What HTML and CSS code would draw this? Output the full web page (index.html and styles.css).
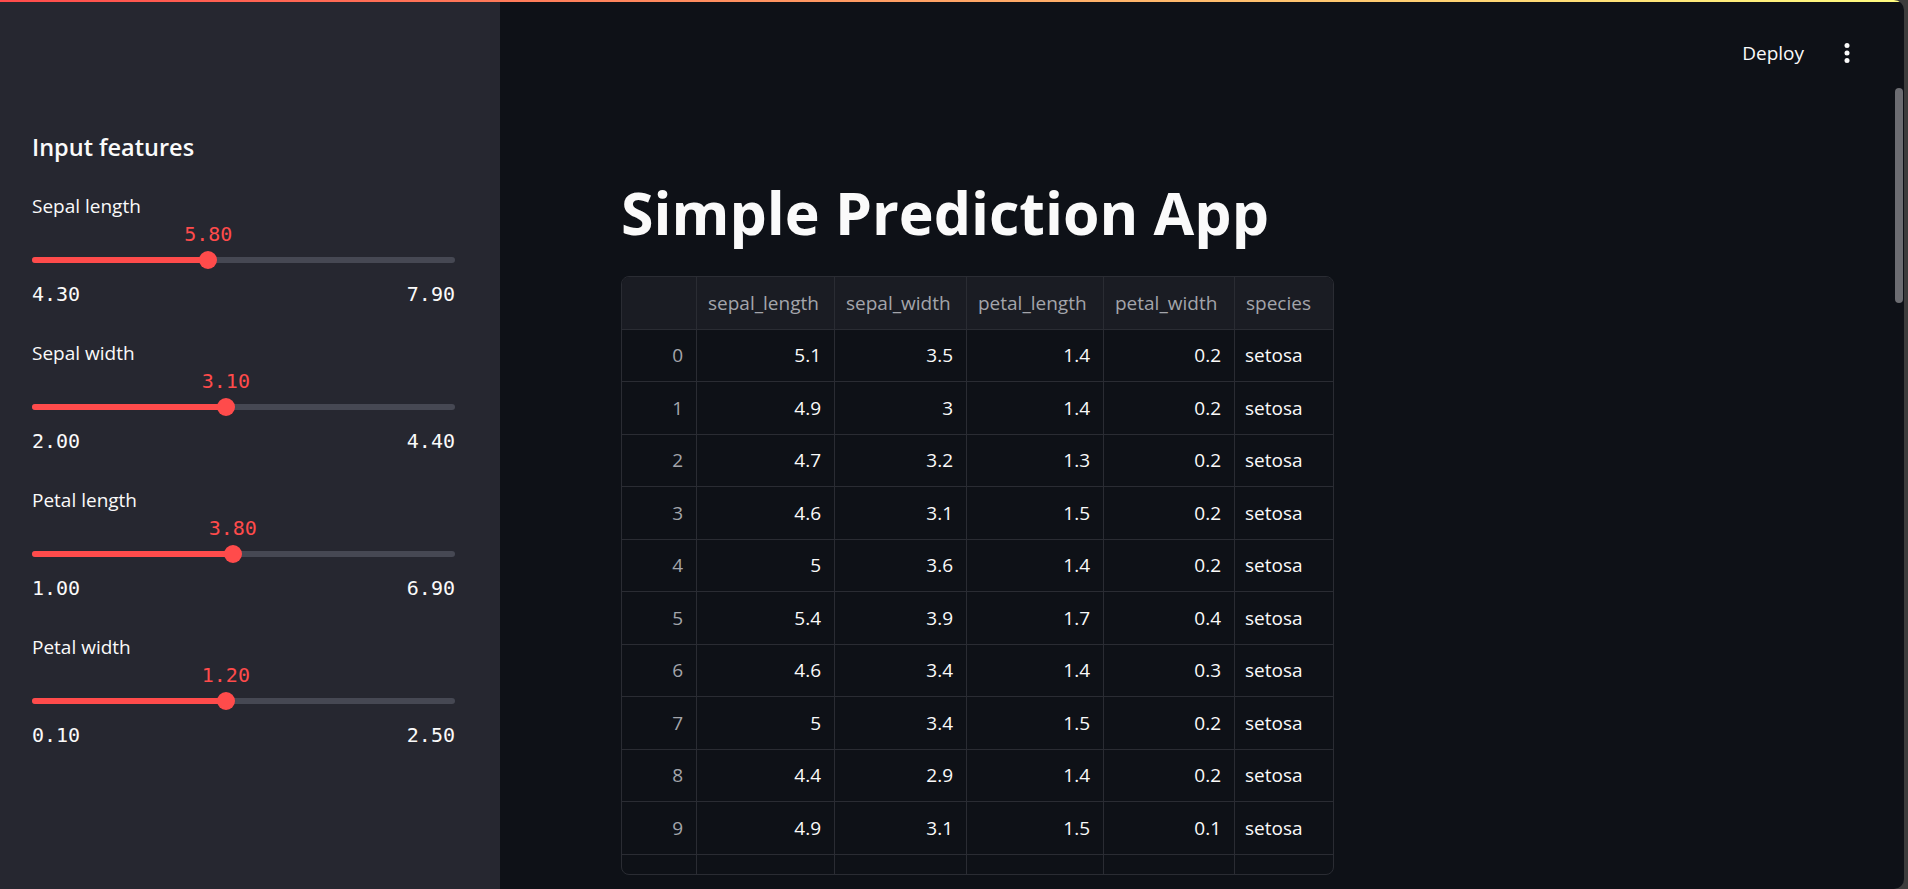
FILE: index.html
```html
<!DOCTYPE html>
<html lang="en">
<head>
<meta charset="utf-8">
<title>Simple Prediction App</title>
<link rel="stylesheet" href="styles.css">
</head>
<body>
<div class="app">
  <div class="decoration"></div>
  <aside class="sidebar">
    <h2 class="sidebar-title">Input features</h2>

    <div class="slider">
      <div class="slider-label">Sepal length</div>
      <div class="slider-body">
        <span class="slider-value" style="left:41.67%">5.80</span>
        <div class="track"><div class="fill" style="width:41.67%"></div><div class="thumb" style="left:41.67%"></div></div>
      </div>
      <div class="slider-range"><span>4.30</span><span>7.90</span></div>
    </div>

    <div class="slider">
      <div class="slider-label">Sepal width</div>
      <div class="slider-body">
        <span class="slider-value" style="left:45.83%">3.10</span>
        <div class="track"><div class="fill" style="width:45.83%"></div><div class="thumb" style="left:45.83%"></div></div>
      </div>
      <div class="slider-range"><span>2.00</span><span>4.40</span></div>
    </div>

    <div class="slider">
      <div class="slider-label">Petal length</div>
      <div class="slider-body">
        <span class="slider-value" style="left:47.46%">3.80</span>
        <div class="track"><div class="fill" style="width:47.46%"></div><div class="thumb" style="left:47.46%"></div></div>
      </div>
      <div class="slider-range"><span>1.00</span><span>6.90</span></div>
    </div>

    <div class="slider">
      <div class="slider-label">Petal width</div>
      <div class="slider-body">
        <span class="slider-value" style="left:45.83%">1.20</span>
        <div class="track"><div class="fill" style="width:45.83%"></div><div class="thumb" style="left:45.83%"></div></div>
      </div>
      <div class="slider-range"><span>0.10</span><span>2.50</span></div>
    </div>
  </aside>

  <main class="main">
    <header class="topbar">
      <button class="deploy">Deploy</button>
      <button class="menu" aria-label="Main menu">
        <svg width="24" height="24" viewBox="0 0 24 24"><circle cx="12" cy="4.5" r="2.5" fill="#fafafa"/><circle cx="12" cy="12" r="2.5" fill="#fafafa"/><circle cx="12" cy="19.5" r="2.5" fill="#fafafa"/></svg>
      </button>
    </header>

    <div class="content">
      <h1 class="title">Simple Prediction App</h1>

      <div class="table">
        <div class="cell head idx"></div>
        <div class="cell head">sepal_length</div>
        <div class="cell head">sepal_width</div>
        <div class="cell head">petal_length</div>
        <div class="cell head">petal_width</div>
        <div class="cell head last">species</div>

        <div class="cell idx">0</div><div class="cell num">5.1</div><div class="cell num">3.5</div><div class="cell num">1.4</div><div class="cell num">0.2</div><div class="cell last">setosa</div>
        <div class="cell idx">1</div><div class="cell num">4.9</div><div class="cell num">3</div><div class="cell num">1.4</div><div class="cell num">0.2</div><div class="cell last">setosa</div>
        <div class="cell idx">2</div><div class="cell num">4.7</div><div class="cell num">3.2</div><div class="cell num">1.3</div><div class="cell num">0.2</div><div class="cell last">setosa</div>
        <div class="cell idx">3</div><div class="cell num">4.6</div><div class="cell num">3.1</div><div class="cell num">1.5</div><div class="cell num">0.2</div><div class="cell last">setosa</div>
        <div class="cell idx">4</div><div class="cell num">5</div><div class="cell num">3.6</div><div class="cell num">1.4</div><div class="cell num">0.2</div><div class="cell last">setosa</div>
        <div class="cell idx">5</div><div class="cell num">5.4</div><div class="cell num">3.9</div><div class="cell num">1.7</div><div class="cell num">0.4</div><div class="cell last">setosa</div>
        <div class="cell idx">6</div><div class="cell num">4.6</div><div class="cell num">3.4</div><div class="cell num">1.4</div><div class="cell num">0.3</div><div class="cell last">setosa</div>
        <div class="cell idx">7</div><div class="cell num">5</div><div class="cell num">3.4</div><div class="cell num">1.5</div><div class="cell num">0.2</div><div class="cell last">setosa</div>
        <div class="cell idx">8</div><div class="cell num">4.4</div><div class="cell num">2.9</div><div class="cell num">1.4</div><div class="cell num">0.2</div><div class="cell last">setosa</div>
        <div class="cell idx">9</div><div class="cell num">4.9</div><div class="cell num">3.1</div><div class="cell num">1.5</div><div class="cell num">0.1</div><div class="cell last">setosa</div>
        <div class="cell idx partial"></div><div class="cell num partial"></div><div class="cell num partial"></div><div class="cell num partial"></div><div class="cell num partial"></div><div class="cell last partial"></div>
      </div>
    </div>

    <div class="scrollbar"></div>
  </main>
</div>
</body>
</html>
```

FILE: styles.css
```css
html, body {
  margin: 0;
  padding: 0;
}

body {
  background: #3c3c3c;
  font-family: "Open Sans", "Noto Sans", sans-serif;
  color: #fafafa;
  overflow: hidden;
}

.app {
  position: relative;
  display: flex;
  width: 1904px;
  height: 889px;
  background: #0e1117;
  border-radius: 0 10px 10px 0;
  overflow: hidden;
}

.decoration {
  position: absolute;
  top: 0;
  left: 0;
  right: 0;
  height: 2px;
  background: linear-gradient(90deg, #ff4b4b, #fffd80);
  z-index: 5;
}

/* ---------- Sidebar ---------- */
.sidebar {
  flex: none;
  width: 500px;
  box-sizing: border-box;
  background: #262730;
  padding: 129px 45px 0 32px;
}

.sidebar-title {
  margin: 0 0 27px;
  font-size: 23.5px;
  font-weight: 600;
  line-height: 36px;
  color: #fafafa;
}

.slider {
  margin-bottom: 33px;
}

.slider-label {
  font-size: 19px;
  line-height: 28px;
  color: #fafafa;
}

.slider-body {
  position: relative;
  height: 48px;
  box-sizing: border-box;
  padding-top: 37px;
}

.slider-value {
  position: absolute;
  top: 2px;
  transform: translateX(-50%);
  font-family: "DejaVu Sans Mono", "Liberation Mono", monospace;
  font-size: 20px;
  line-height: 24px;
  color: #ff4b4b;
  white-space: nowrap;
}

.track {
  position: relative;
  height: 6px;
  border-radius: 3px;
  background: #464853;
}

.fill {
  height: 100%;
  border-radius: 3px;
  background: #ff4b4b;
}

.thumb {
  position: absolute;
  top: 50%;
  width: 18px;
  height: 18px;
  border-radius: 50%;
  background: #ff4b4b;
  transform: translate(-50%, -50%);
}

.slider-range {
  display: flex;
  justify-content: space-between;
  margin-top: 14px;
  font-family: "DejaVu Sans Mono", "Liberation Mono", monospace;
  font-size: 20px;
  line-height: 24px;
  color: #fafafa;
}

/* ---------- Main ---------- */
.main {
  position: relative;
  flex: 1;
  min-width: 0;
}

.topbar {
  display: flex;
  justify-content: flex-end;
  align-items: center;
  gap: 31px;
  height: 105px;
  padding-right: 45px;
}

.deploy {
  background: none;
  border: none;
  padding: 0;
  font-family: "Open Sans", sans-serif;
  font-size: 19px;
  line-height: 28px;
  color: #fafafa;
}

.menu {
  display: flex;
  background: none;
  border: none;
  padding: 0;
  width: 24px;
  height: 24px;
}

.content {
  padding-left: 121px;
}

.title {
  margin: 72px 0 29px;
  font-size: 59px;
  font-weight: 700;
  line-height: 70px;
  color: #fafafa;
}

.table {
  display: grid;
  grid-template-columns: 75px 138px 132px 137px 131px 98px;
  grid-auto-rows: 52.5px;
  width: max-content;
  height: 599px;
  box-sizing: border-box;
  margin-top: 1px;
  border: 1px solid #2a2c33;
  border-radius: 8px;
  overflow: hidden;
  font-size: 19px;
}

.cell {
  display: flex;
  align-items: center;
  justify-content: flex-end;
  padding: 0 13px;
  border-right: 1px solid #2a2c33;
  border-bottom: 1px solid #2a2c33;
  color: #fafafa;
  white-space: nowrap;
  overflow: hidden;
}

.cell.last {
  border-right: none;
  justify-content: flex-start;
  padding-left: 10px;
}

.cell.head {
  background: #1a1c23;
  color: #a3a5ab;
  justify-content: flex-start;
  padding-left: 11px;
}

.cell.idx {
  color: #a3a5ab;
}

.cell.partial {
  border-bottom: none;
}

.scrollbar {
  position: absolute;
  top: 88px;
  right: 1px;
  width: 8px;
  height: 215px;
  border-radius: 4px;
  background: #6c6d72;
}
```
